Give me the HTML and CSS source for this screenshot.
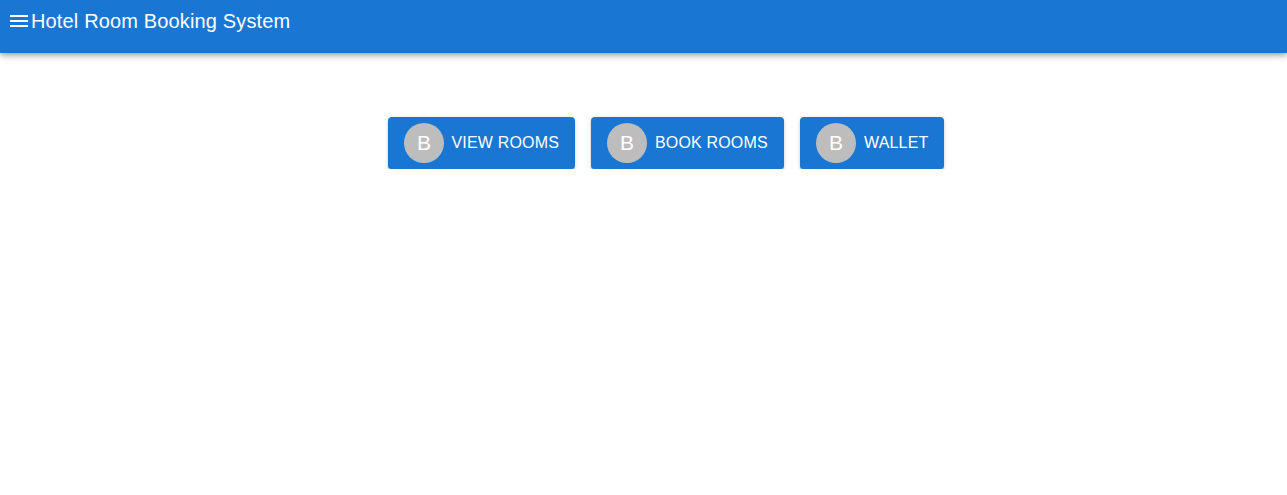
FILE: index.html
```html
<!DOCTYPE html>
<html lang="en">
<head>
<meta charset="utf-8">
<title>Hotel Room Booking System</title>
<link rel="stylesheet" href="styles.css">
</head>
<body>
<header class="app-bar">
  <svg class="menu-icon" viewBox="0 0 24 24" aria-hidden="true"><path d="M3 18h18v-2H3v2zm0-5h18v-2H3v2zm0-7v2h18V6H3z"/></svg>
  <h1 class="title">Hotel Room Booking System</h1>
</header>
<main class="actions">
  <button class="action action-view"><span class="avatar">B</span><span class="label">View Rooms</span></button>
  <button class="action action-book"><span class="avatar">B</span><span class="label">Book Rooms</span></button>
  <button class="action action-wallet"><span class="avatar">B</span><span class="label">Wallet</span></button>
</main>
</body>
</html>
```
FILE: styles.css
```css
* {
  box-sizing: border-box;
}

body {
  margin: 0;
  background: #fff;
  font-family: "Liberation Sans", Arial, sans-serif;
}

.app-bar {
  display: flex;
  align-items: flex-start;
  height: 53px;
  padding: 9px 7px;
  background: #1976d2;
  color: #fff;
  box-shadow: 0 2px 4px -1px rgba(0, 0, 0, 0.2), 0 4px 5px rgba(0, 0, 0, 0.14), 0 1px 10px rgba(0, 0, 0, 0.12);
}

.menu-icon {
  width: 24px;
  height: 24px;
  fill: currentColor;
}

.title {
  margin: 0;
  font-size: 20px;
  font-weight: 400;
  line-height: 24px;
  letter-spacing: 0.15px;
}

.actions {
  display: flex;
  gap: 16px;
  padding: 64px 0 0 388px;
}

.action {
  display: flex;
  align-items: center;
  gap: 8px;
  height: 52px;
  padding: 6px 0 6px 16px;
  border: 0;
  border-radius: 4px;
  background: #1976d2;
  color: #fff;
  font-family: inherit;
  box-shadow: 0 1px 0 rgba(0, 0, 0, 0.18), 0 2px 2px rgba(0, 0, 0, 0.16), 0 1px 5px rgba(0, 0, 0, 0.12);
}

.action-view {
  gap: 7.5px;
  width: 187px;
}

.action-book {
  width: 193px;
}

.action-wallet {
  width: 144px;
}

.avatar {
  display: flex;
  align-items: center;
  justify-content: center;
  width: 40px;
  height: 40px;
  border-radius: 50%;
  background: #bdbdbd;
  font-size: 21px;
}

.label {
  font-size: 16px;
  line-height: 24px;
  letter-spacing: 0.17px;
  text-transform: uppercase;
  white-space: nowrap;
}
```
